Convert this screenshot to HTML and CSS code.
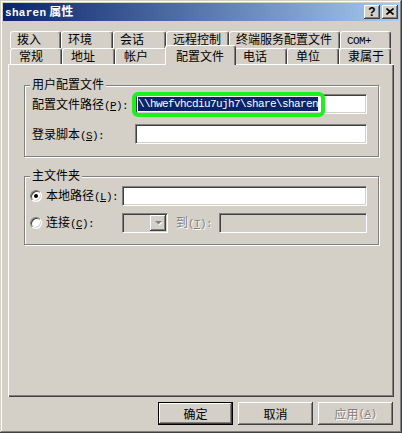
FILE: index.html
```html
<!DOCTYPE html>
<html lang="zh-CN">
<head>
<meta charset="utf-8">
<title>sharen 属性</title>
<link rel="stylesheet" href="styles.css">
</head>
<body>
<div class="window">
  <div class="titlebar">
    <span class="title"><span class="latin">sharen</span> 属性</span>
    <div class="tbtns">
      <span class="tbtn q">?</span>
      <span class="tbtn">
        <svg width="8" height="7" viewBox="0 0 8 7"><path d="M0.5 0.5 L7.5 6.5 M7.5 0.5 L0.5 6.5" stroke="#000" stroke-width="1.6" fill="none"/></svg>
      </span>
    </div>
  </div>
  <div class="main">
    <div class="tabs">
      <div class="tabrow row1">
        <div class="tab">拨入</div>
        <div class="tab">环境</div>
        <div class="tab">会话</div>
        <div class="tab">远程控制</div>
        <div class="tab">终端服务配置文件</div>
        <div class="tab"><span class="k">COM+</span></div>
      </div>
      <div class="tabrow row2">
        <div class="tab">常规</div>
        <div class="tab">地址</div>
        <div class="tab">帐户</div>
        <div class="tab active">配置文件</div>
        <div class="tab">电话</div>
        <div class="tab">单位</div>
        <div class="tab">隶属于</div>
      </div>
    </div>
    <div class="panel">
      <div class="group g1">
        <div class="legend">用户配置文件</div>
        <div class="form1">
          <div class="lbl">配置文件路径<span class="k">(<u>P</u>):</span></div>
          <div class="field"><span class="hl"><span class="sel">\\hwefvhcdiu7ujh7\share\sharen</span></span></div>
          <div class="lbl">登录脚本<span class="k">(<u>S</u>):</span></div>
          <div class="field"></div>
        </div>
      </div>
      <div class="group g2">
        <div class="legend">主文件夹</div>
        <div class="form2">
          <div class="rrow">
            <span class="radio checked"></span>
            <span class="rlbl">本地路径<span class="k">(<u>L</u>):</span></span>
            <div class="field"></div>
          </div>
          <div class="rrow">
            <span class="radio"></span>
            <span class="rlbl">连接<span class="k">(<u>C</u>):</span></span>
            <div class="combo">
              <span class="ddbtn">
                <svg width="7" height="5" viewBox="0 0 7 5"><path d="M1 1 H8 L4.5 4.5 Z" fill="#fff"/><path d="M0 0 H7 L3.5 3.5 Z" fill="#808080"/></svg>
              </span>
            </div>
            <span class="to">到<span class="k">(<u>T</u>):</span></span>
            <div class="field disabled"></div>
          </div>
        </div>
      </div>
    </div>
    <div class="buttons">
      <div class="btn default">确定</div>
      <div class="btn">取消</div>
      <div class="btn disabled">应用<span class="k">(<u>A</u>)</span></div>
    </div>
  </div>
</div>
</body>
</html>
```

FILE: styles.css
```css
* { box-sizing: border-box; }
html, body { margin: 0; padding: 0; background: #D4D0C8; }
body {
  font-family: "Noto Sans CJK SC", "Noto Sans", sans-serif;
  font-size: 12px;
  color: #000;
}
.k {
  font-family: "Liberation Mono", "DejaVu Sans Mono", monospace;
  font-size: 11px;
  letter-spacing: -0.6px;
}
.window {
  width: 402px;
  height: 433px;
  padding: 3px;
  background: #D4D0C8;
  box-shadow: inset -1px -1px #404040, inset 1px 1px #D4D0C8, inset -2px -2px #808080, inset 2px 2px #fff;
  display: flex;
  flex-direction: column;
}
.titlebar {
  height: 18px;
  flex: none;
  background: linear-gradient(to right, #0A246A, #A6CAF0);
  display: flex;
  align-items: center;
  justify-content: space-between;
  padding: 0 1px 0 2px;
  color: #fff;
  font-weight: bold;
}
.title { font-size: 12px; line-height: 18px; white-space: nowrap; }
.title .latin { font-family: "Liberation Mono", monospace; font-size: 11px; letter-spacing: 0.3px; }
.tbtns { display: flex; gap: 2px; }
.tbtn {
  width: 16px;
  height: 14px;
  background: #D4D0C8;
  box-shadow: inset -1px -1px #404040, inset 1px 1px #fff, inset -2px -2px #808080;
  display: flex;
  align-items: center;
  justify-content: center;
  color: #000;
  padding-bottom: 1px;
}
.tbtn.q { font-family: "Liberation Sans", sans-serif; font-size: 12px; font-weight: bold; line-height: 12px; }
.main {
  padding: 10px 5px 0 5px;
  display: flex;
  flex-direction: column;
}
.tabs { padding-left: 2px; }
.tabrow { display: flex; }
.row1 { height: 17px; }
.row2 { height: 16px; }
.tab {
  flex: none;
  height: 100%;
  background: #D4D0C8;
  border-top: 1px solid #fff;
  border-left: 1px solid #fff;
  border-right: 1px solid #404040;
  box-shadow: inset -1px 0 #808080;
  border-radius: 3px 3px 0 0;
  padding-left: 6px;
  line-height: 14px;
  white-space: nowrap;
}
.row2 .tab { padding-left: 8px; line-height: 14px; }
.row1 .tab:nth-child(1) { width: 51px; }
.row1 .tab:nth-child(2) { width: 52px; }
.row1 .tab:nth-child(3) { width: 53px; }
.row1 .tab:nth-child(4) { width: 63px; }
.row1 .tab:nth-child(5) { width: 111px; }
.row1 .tab:nth-child(6) { width: 51px; }
.row2 .tab:nth-child(1) { width: 52px; }
.row2 .tab:nth-child(2) { width: 53px; }
.row2 .tab:nth-child(3) { width: 52px; }
.row2 .tab:nth-child(4) { width: 67px; }
.row2 .tab:nth-child(5) { width: 53px; }
.row2 .tab:nth-child(6) { width: 52px; }
.row2 .tab:nth-child(7) { width: 52px; }
.row2 .tab.active {
  width: 71px;
  height: 20px;
  margin: -3px -2px -1px;
  position: relative;
  z-index: 1;
  padding-left: 10px;
  line-height: 19px;
}
.panel {
  width: 386px;
  height: 333px;
  flex: none;
  box-shadow: inset 1px 1px #fff, inset -1px -1px #404040, inset -2px -2px #808080;
  padding: 0 15px 0 16px;
}
.group {
  border: 1px solid #808080;
  box-shadow: inset 1px 1px #fff, 1px 1px #fff;
  display: flex;
  flex-direction: column;
}
.g1 { margin-top: 21px; padding: 8px 11px 10px 7px; }
.g2 { margin-top: 19px; padding: 9px 11px 11px 5px; }
.legend {
  align-self: flex-start;
  background: #D4D0C8;
  padding: 0 2px;
  height: 14px;
  line-height: 14px;
}
.g1 .legend { margin: -17px 0 3px -2px; }
.g2 .legend { margin: -18px 0 4px 0; }
.form1 {
  display: grid;
  grid-template-columns: 96px 1fr;
  row-gap: 8px;
  column-gap: 7px;
}
.lbl, .rlbl, .to { line-height: 20px; white-space: nowrap; }
.field {
  height: 20px;
  background: #fff;
  border: 1px solid;
  border-color: #808080 #fff #fff #808080;
  box-shadow: inset 1px 1px #404040, inset -1px -1px #D4D0C8;
  padding: 0 1px 0 2px;
  display: flex;
  align-items: center;
}
.field.disabled { background: #D4D0C8; }
.hl {
  display: inline-flex;
  border: 4px solid #1EEF1E;
  border-radius: 6px;
  padding: 1px 3px 2px 2px;
  margin: 0 -7px 0 -6px;
}
.sel {
  display: block;
  background: #0A246A;
  color: #fff;
  font-family: "Liberation Mono", monospace;
  font-size: 11px;
  letter-spacing: -0.6px;
  height: 14px;
  line-height: 14px;
  white-space: nowrap;
}
.form2 { display: flex; flex-direction: column; gap: 7px; }
.rrow { display: flex; align-items: center; height: 20px; }
.rrow .field { flex: 1; }
.radio {
  flex: none;
  width: 12px;
  height: 12px;
  border-radius: 50%;
  background: #fff;
  border: 1px solid;
  border-color: #808080 #fff #fff #808080;
  box-shadow: inset 1px 1px #404040, inset -1px -1px #D4D0C8;
  margin-right: 4px;
  display: flex;
  align-items: center;
  justify-content: center;
}
.radio.checked::after {
  content: "";
  width: 4px;
  height: 4px;
  border-radius: 50%;
  background: #000;
}
.rlbl { width: 72px; margin-right: 4px; }
.combo {
  flex: none;
  width: 46px;
  height: 20px;
  background: #D4D0C8;
  border: 1px solid;
  border-color: #808080 #fff #fff #808080;
  box-shadow: inset 1px 1px #404040, inset -1px -1px #D4D0C8;
  padding: 1px;
  display: flex;
  justify-content: flex-end;
}
.ddbtn {
  width: 16px;
  height: 16px;
  background: #D4D0C8;
  box-shadow: inset -1px -1px #404040, inset 1px 1px #fff, inset -2px -2px #808080;
  display: flex;
  align-items: center;
  justify-content: center;
}
.to {
  width: 36px;
  margin: 0 7px 0 8px;
  color: #808080;
  text-shadow: 1px 1px #fff;
}
.buttons {
  display: flex;
  justify-content: flex-end;
  gap: 5px;
  margin-top: 5px;
  padding-right: 1px;
}
.btn {
  width: 75px;
  height: 23px;
  background: #D4D0C8;
  box-shadow: inset -1px -1px #404040, inset 1px 1px #fff, inset -2px -2px #808080;
  display: flex;
  align-items: center;
  justify-content: center;
  white-space: nowrap;
}
.btn.default {
  border: 1px solid #000;
}
.btn.disabled {
  color: #808080;
  text-shadow: 1px 1px #fff;
}
```
